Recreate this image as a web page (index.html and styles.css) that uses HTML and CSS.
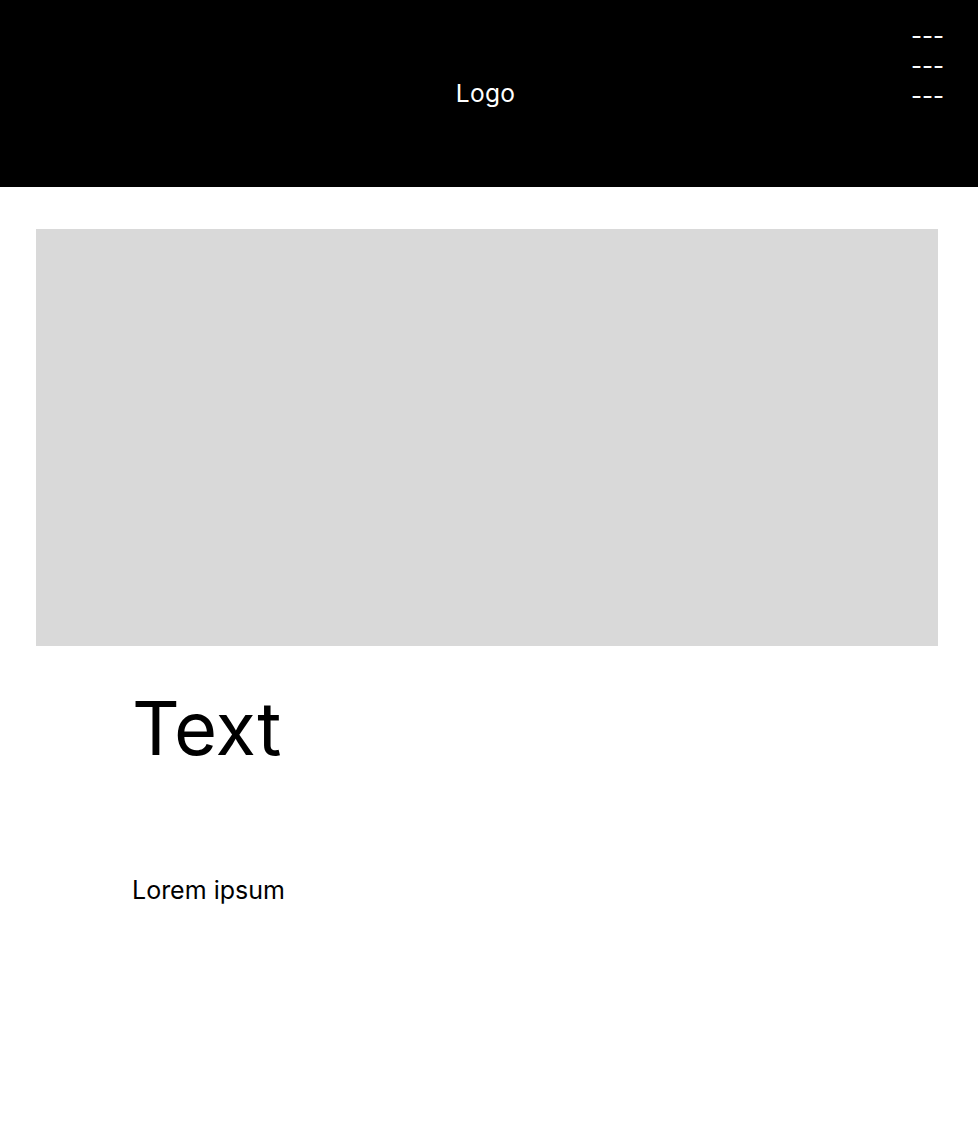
FILE: index.html
```html
<!DOCTYPE html>
<html lang="en">
<head>
<meta charset="utf-8">
<title>Page</title>
<link rel="stylesheet" href="styles.css">
</head>
<body>
<header class="header">
  <div class="spacer"></div>
  <div class="logo">Logo</div>
  <nav class="menu">
    <span>---</span>
    <span>---</span>
    <span>---</span>
  </nav>
</header>
<main class="main">
  <div class="hero"></div>
  <section class="content">
    <h1 class="title">Text</h1>
    <p class="lead">Lorem ipsum</p>
  </section>
</main>
</body>
</html>
```
FILE: styles.css
```css
* { box-sizing: border-box; }
html, body { margin: 0; padding: 0; background: #fff; }
body { font-family: Inter, "Noto Sans", sans-serif; color: #000; }

.header {
  height: 187px;
  background: #000;
  color: #fff;
  display: grid;
  grid-template-columns: 1fr auto 1fr;
  align-items: center;
  padding-right: 7px;
}
.logo {
  font-size: 24.5px;
  line-height: 30px;
  letter-spacing: 0.3px;
  margin-bottom: 2px;
}
.menu {
  align-self: start;
  justify-self: end;
  padding: 21px 27px 0 0;
  display: flex;
  flex-direction: column;
  font-size: 24px;
  line-height: 30px;
}

.main {
  padding: 42px 40px 0 36px;
}
.hero {
  height: 417px;
  background: #d9d9d9;
}
.content {
  padding-left: 96px;
}
.title {
  margin: 36px 0 0;
  font-size: 74px;
  font-weight: 400;
  line-height: 92px;
}
.lead {
  margin: 101px 0 0;
  font-size: 25px;
  line-height: 30px;
}
```
